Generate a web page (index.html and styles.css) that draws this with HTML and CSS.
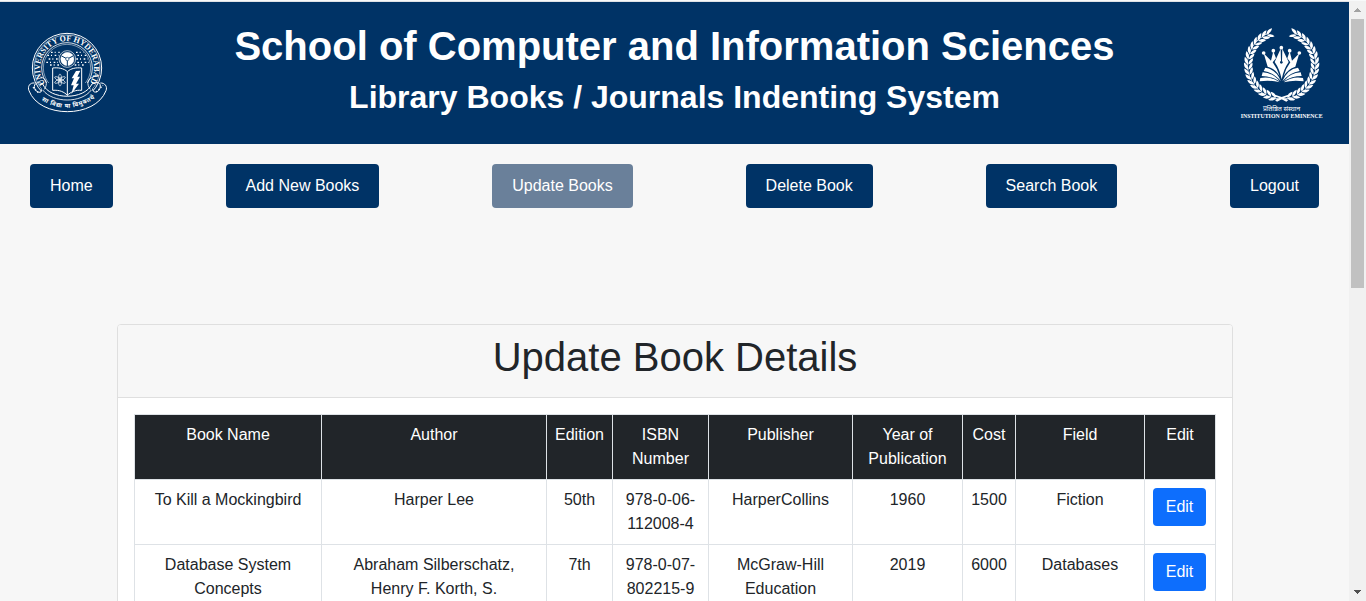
FILE: index.html
```html
<!DOCTYPE html>
<html lang="en">
<head>
<meta charset="utf-8">
<title>Update Book Details</title>
<link rel="stylesheet" href="styles.css">
</head>
<body>
<div class="window">
<div class="page">
  <header class="header">
    <svg class="seal" viewBox="0 0 288 288" fill="none" stroke="#fff">
      <defs>
        <path id="ring" d="M75 179A81 81 0 1 1 207 179"/>
        <path id="ribbon" d="M58 224Q141 281 232 218"/>
      </defs>
      <circle cx="141" cy="132" r="104" stroke-width="3"/>
      <circle cx="141" cy="132" r="99" stroke-width="1.5"/>
      <circle cx="141" cy="132" r="76" stroke-width="2.5"/>
      <circle cx="141" cy="132" r="71" stroke-width="1.5"/>
      <path fill="#036" stroke-width="3" d="M64 196C68 211 46 205 44 193C39 177 55 172 68 180C90 229 193 229 216 180C229 172 245 174 240 192C238 205 218 210 218 195M44 177C29 175 22 188 27 200C58 284 226 284 258 200C263 187 254 176 241 177"/>
      <path stroke-width="2.5" d="M68 198C100 238 184 238 214 198M61 159C80 162 84 180 73 196M221 159C201 163 199 181 211 196"/>
      <text class="seal-name" textLength="350" lengthAdjust="spacingAndGlyphs"><textPath href="#ring" textLength="350" lengthAdjust="spacingAndGlyphs">UNIVERSITY OF HYDERABAD</textPath></text>
      <path stroke-width="4" stroke-dasharray="4 5" d="M39 190L55 206M229 204L249 184"/>
      <text class="seal-motto"><textPath href="#ribbon" startOffset="8" textLength="170" lengthAdjust="spacing">सा विद्या या विमुक्तये</textPath></text>
      <path stroke-width="4" stroke-dasharray="5 6 3 8" d="M93 85H119M82 94H116M86 105H115M79 115H114M90 123H119M168 85H191M172 94H204M169 105H203M172 115H207M164 123H192"/>
      <circle cx="142" cy="105" r="25" stroke-width="2"/>
      <circle cx="142" cy="105" r="20" fill="#fff"/>
      <path stroke="#036" stroke-width="3" d="M125 96L142 105L159 96M142 105V126"/>
      <circle cx="142" cy="105" r="5" fill="#fff" stroke="#036" stroke-width="2"/>
      <path stroke-width="3" d="M142 143C132 133 114 130 98 132V199C118 197 133 204 142 214C152 204 167 197 185 199V132C168 130 153 133 142 143V214"/>
      <g stroke-width="2">
        <ellipse cx="120" cy="168" rx="5" ry="18"/>
        <ellipse cx="120" cy="168" rx="5" ry="18" transform="rotate(60 120 168)"/>
        <ellipse cx="120" cy="168" rx="5" ry="18" transform="rotate(120 120 168)"/>
        <circle cx="120" cy="168" r="3" fill="#fff"/>
      </g>
      <path fill="#fff" stroke="none" d="M168 141L181 140L172 158H180L168 179H177L154 210L161 184H153L162 163H155Z"/>
    </svg>
    <div class="titles">
      <h1 class="school">School of Computer and Information Sciences</h1>
      <h2 class="system">Library Books / Journals Indenting System</h2>
    </div>
    <svg class="eminence" viewBox="0 0 312 312" fill="#fff">
      <defs>
        <g id="leaf">
          <path d="M54 142C44 138 41 130 43 120C51 125 55 133 54 142Z"/>
          <path d="M55 142C55 132 60 125 68 122C69 132 64 139 55 142Z"/>
          <path d="M52 134H54V152H52Z"/>
        </g>
        <g id="branch">
          <use href="#leaf" transform="rotate(-76 155 134)"/>
          <use href="#leaf" transform="rotate(-67 155 134)"/>
          <use href="#leaf" transform="rotate(-58 155 134)"/>
          <use href="#leaf" transform="rotate(-49 155 134)"/>
          <use href="#leaf" transform="rotate(-40 155 134)"/>
          <use href="#leaf" transform="rotate(-31 155 134)"/>
          <use href="#leaf" transform="rotate(-22 155 134)"/>
          <use href="#leaf" transform="rotate(-13 155 134)"/>
          <use href="#leaf" transform="rotate(-4 155 134)"/>
          <use href="#leaf" transform="rotate(5 155 134)"/>
          <use href="#leaf" transform="rotate(14 155 134)"/>
          <use href="#leaf" transform="rotate(23 155 134)"/>
          <use href="#leaf" transform="rotate(32 155 134)"/>
          <use href="#leaf" transform="rotate(41 155 134)"/>
          <use href="#leaf" transform="rotate(50 155 134)"/>
          <use href="#leaf" transform="rotate(59 155 134)"/>
          <use href="#leaf" transform="rotate(68 155 134)"/>
          <path d="M135 224Q154 229 175 240L169 245Q151 234 133 229Z"/>
        </g>
      </defs>
      <use href="#branch"/>
      <use href="#branch" transform="translate(310 0) scale(-1 1)"/>
      <circle cx="101" cy="99" r="5.5"/><circle cx="130" cy="92" r="5.5"/><circle cx="154" cy="83" r="5.5"/><circle cx="179" cy="92" r="5.5"/><circle cx="208" cy="99" r="5.5"/>
      <path d="M101 100L123 122L130 94L138 115L128 127Q141 144 149 169Q137 147 113 140ZM208 100L186 122L179 94L172 115L181 127Q168 144 161 169Q173 147 196 140Z"/>
      <path d="M152 86L134 126Q149 147 155 178Q161 147 176 126L157 86L156 123H153Z"/>
      <circle cx="154" cy="127" r="4" fill="#036"/>
      <path d="M106 143Q138 147 153 184Q130 157 101 153ZM204 143Q172 147 157 184Q180 157 209 153ZM98 157Q129 158 149 184Q124 168 95 168ZM212 157Q181 158 161 184Q186 168 215 168ZM91 174Q123 168 149 187Q120 179 89 184ZM219 174Q187 168 161 187Q190 179 221 184Z"/>
      <text class="em-hindi" x="155" y="274" text-anchor="middle" textLength="112" lengthAdjust="spacingAndGlyphs">प्रतिष्ठित संस्थान</text>
      <text class="em-name" x="155" y="295" text-anchor="middle" textLength="246" lengthAdjust="spacingAndGlyphs">INSTITUTION OF EMINENCE</text>
    </svg>
  </header>
  <nav class="nav">
    <a class="nav-btn">Home</a>
    <a class="nav-btn">Add New Books</a>
    <a class="nav-btn current">Update Books</a>
    <a class="nav-btn">Delete Book</a>
    <a class="nav-btn">Search Book</a>
    <a class="nav-btn">Logout</a>
  </nav>
  <main class="card">
    <div class="card-header"><h1 class="card-title">Update Book Details</h1></div>
    <div class="card-body">
      <table class="books">
        <colgroup>
          <col class="c-name"><col class="c-author"><col class="c-edition"><col class="c-isbn"><col class="c-publisher"><col class="c-year"><col class="c-cost"><col class="c-field"><col class="c-edit">
        </colgroup>
        <thead>
          <tr><th>Book Name</th><th>Author</th><th>Edition</th><th>ISBN Number</th><th>Publisher</th><th>Year of Publication</th><th>Cost</th><th>Field</th><th>Edit</th></tr>
        </thead>
        <tbody>
          <tr><td>To Kill a Mockingbird</td><td>Harper Lee</td><td>50th</td><td>978-0-06-112008-4</td><td>HarperCollins</td><td>1960</td><td>1500</td><td>Fiction</td><td><a class="edit">Edit</a></td></tr>
          <tr><td>Database System Concepts</td><td>Abraham Silberschatz, Henry F. Korth, S.</td><td>7th</td><td>978-0-07-802215-9</td><td>McGraw-Hill Education</td><td>2019</td><td>6000</td><td>Databases</td><td><a class="edit">Edit</a></td></tr>
        </tbody>
      </table>
    </div>
  </main>
</div>
<div class="scrollbar">
  <svg class="arrow" viewBox="0 0 17 17" fill="#a3a3a3" shape-rendering="crispEdges"><path d="M8 7h1v1h1v1h1v1h1v1H5v-1h1V9h1V8h1z"/></svg>
  <div class="thumb"></div>
  <svg class="arrow" viewBox="0 0 17 17" fill="#505050" shape-rendering="crispEdges"><path d="M5 6h7v1h-1v1h-1v1H9v1H8V9H7V8H6V7H5z"/></svg>
</div>
</div>
</body>
</html>
```

FILE: styles.css
```css
* { box-sizing: border-box; }
body {
  margin: 0;
  height: 601px;
  overflow: hidden;
  background: #f7f7f7;
  color: #212529;
  font: 16px/24px "Liberation Sans", Arial, sans-serif;
}
h1, h2 { margin: 0; }
.window {
  display: flex;
  height: 601px;
  border-top: 1px solid #f8f9fa;
}
.page {
  flex: 1;
  overflow: hidden;
  border-top: 1px solid #dfe1e5;
}
.header {
  display: flex;
  height: 142px;
  padding: 18px 15px 0 20px;
  background: #003366;
  color: #fff;
}
.seal { width: 96px; height: 96px; margin-top: 4px; }
.eminence { width: 104px; height: 104px; }
.seal-name { font: bold 25px "Liberation Serif", serif; fill: #fff; stroke: none; }
.seal-motto { font: bold 18px "Noto Sans", sans-serif; fill: #fff; stroke: none; }
.em-hindi { font: 20px "Noto Sans", sans-serif; }
.em-name { font: bold 16px "Liberation Serif", serif; }
.titles { flex: 1; padding: 2px 0 0 3px; text-align: center; white-space: nowrap; }
.school { font-size: 40px; line-height: 48px; margin-bottom: 8px; }
.system { font-size: 32px; line-height: 38px; }
.nav {
  display: flex;
  justify-content: space-between;
  padding: 20px 30px;
}
.nav-btn {
  padding: 10px 20px;
  border-radius: 4px;
  background: #003366;
  color: #fff;
}
.current { background: #6a809a; }
.card {
  width: 1116px;
  margin: 96px 0 0 117px;
  background: #fff;
  border: 1px solid #dfdfdf;
  border-radius: 4px;
}
.card-header {
  padding: 8px 16px 16px;
  background: #f7f7f7;
  border-bottom: 1px solid #dfdfdf;
  border-radius: 3px 3px 0 0;
}
.card-title { font-size: 40px; line-height: 48px; font-weight: 400; text-align: center; }
.card-body { padding: 16px; }
.books {
  width: 1082px;
  table-layout: fixed;
  border-collapse: collapse;
  text-align: center;
}
.books th, .books td {
  height: 65px;
  padding: 8px;
  border: 1px solid #dee2e6;
  vertical-align: top;
  font-weight: 400;
}
.books th { background: #212529; color: #fff; padding: 8px 7px; }
.c-name { width: 187px; }
.c-author { width: 225px; }
.c-edition { width: 66px; }
.c-isbn { width: 96px; }
.c-publisher { width: 144px; }
.c-year { width: 110px; }
.c-cost { width: 53px; }
.c-field { width: 129px; }
.c-edit { width: 71px; }
.edit {
  display: block;
  width: 53px;
  height: 38px;
  padding: 7px 0;
  border-radius: 4px;
  background: #0d6efd;
  color: #fff;
}
.scrollbar {
  display: flex;
  flex-direction: column;
  width: 17px;
  background: #f1f1f1;
}
.arrow { width: 17px; height: 17px; }
.thumb {
  width: 13px;
  height: 269px;
  margin: 1px 2px auto;
  background: #c1c1c1;
}
```
